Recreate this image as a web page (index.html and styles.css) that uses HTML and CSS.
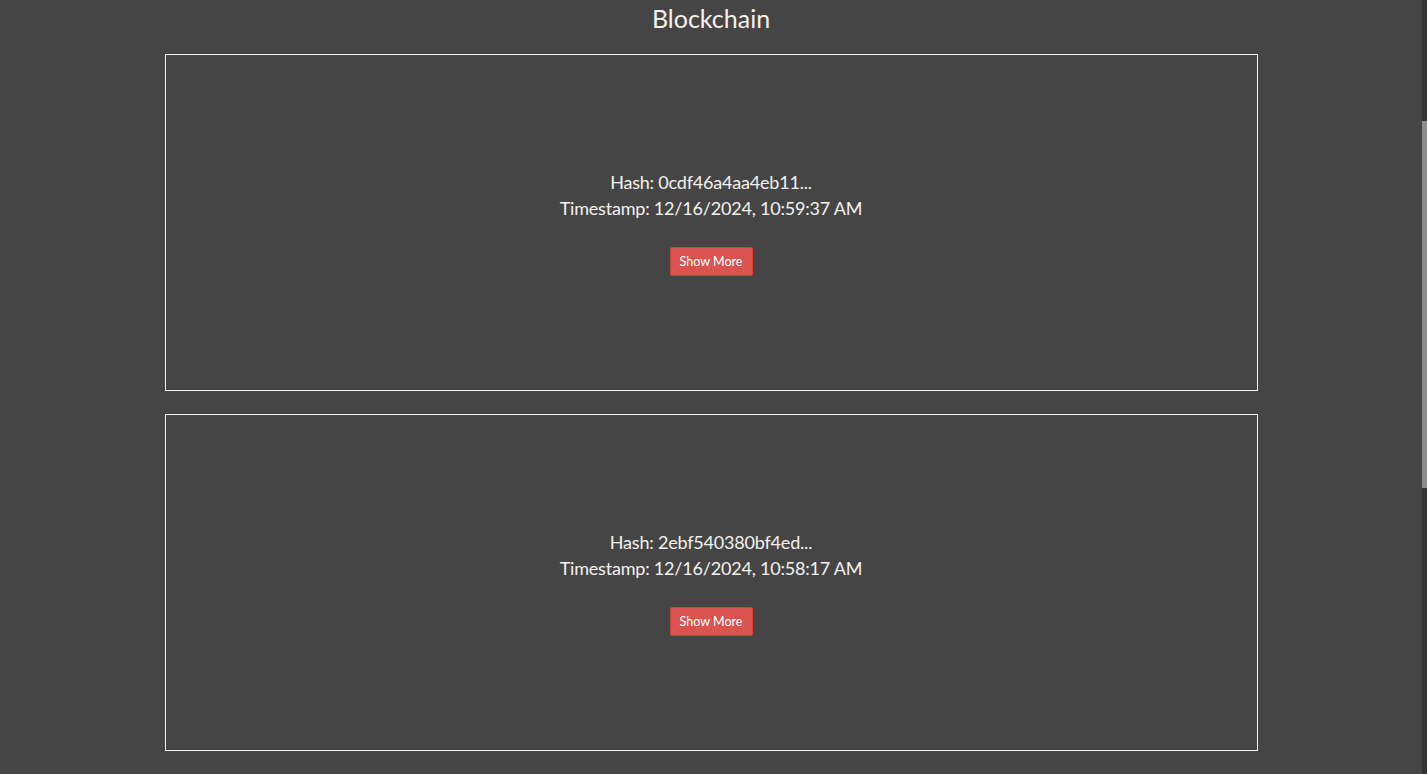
FILE: index.html
```html
<!DOCTYPE html>
<html lang="en">
<head>
<meta charset="utf-8">
<title>Blockchain</title>
<link rel="stylesheet" href="styles.css">
</head>
<body>
<div class="page">
  <h1 class="title">Blockchain</h1>
  <div class="chain">
    <div class="block">
      <p class="line">Hash: 0cdf46a4aa4eb11...</p>
      <p class="line">Timestamp: 12/16/2024, 10:59:37 AM</p>
      <button class="more">Show More</button>
    </div>
    <div class="block">
      <p class="line">Hash: 2ebf540380bf4ed...</p>
      <p class="line">Timestamp: 12/16/2024, 10:58:17 AM</p>
      <button class="more">Show More</button>
    </div>
    <div class="block">
      <p class="line">Hash: 9a1c07e3b5d2f48...</p>
      <p class="line">Timestamp: 12/16/2024, 10:56:51 AM</p>
      <button class="more">Show More</button>
    </div>
  </div>
</div>
<div class="scrollbar"><div class="thumb"></div></div>
</body>
</html>
```
FILE: styles.css
```css
html, body {
  margin: 0;
  height: 100%;
  overflow: hidden;
  background: #454545;
}
body {
  font-family: "Lato", "Open Sans", sans-serif;
  color: #f4f1ee;
}
.page {
  width: 1422px;
}
.title {
  margin: 0;
  padding-top: 4px;
  height: 50px;
  font-size: 25px;
  font-weight: 400;
  text-align: center;
  line-height: 28px;
}
.chain {
  display: flex;
  flex-direction: column;
  align-items: center;
  gap: 23px;
}
.block {
  box-sizing: border-box;
  width: 1093px;
  height: 337px;
  border: 1px solid #f2f2f2;
  display: flex;
  flex-direction: column;
  align-items: center;
  justify-content: center;
  flex-shrink: 0;
}
.line {
  margin: 0;
  font-size: 18px;
  line-height: 26px;
  letter-spacing: -0.2px;
}
.more {
  margin-top: 26px;
  width: 83px;
  height: 29px;
  padding: 0;
  background: #d9534f;
  color: #fff;
  border: 1px solid #d43f3a;
  border-radius: 2px;
  font-family: inherit;
  font-size: 12.5px;
}
.scrollbar {
  position: fixed;
  top: 0;
  right: 0;
  width: 5px;
  height: 100%;
  background: #353535;
}
.thumb {
  margin-top: 121px;
  height: 367px;
  background: #8c8c8c;
}
```
